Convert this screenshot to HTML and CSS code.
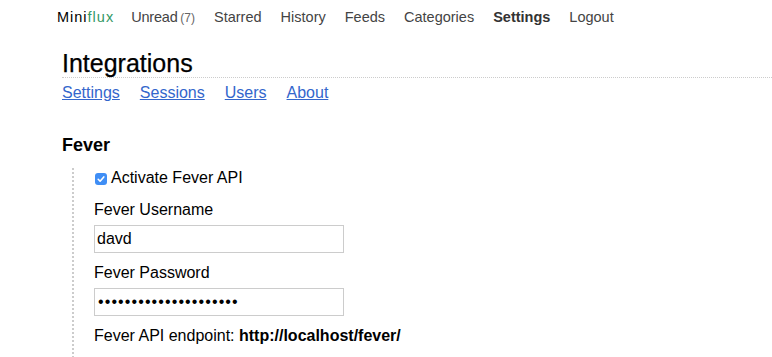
FILE: index.html
```html
<!DOCTYPE html>
<html lang="en">
<head>
<meta charset="utf-8">
<title>Integrations - Miniflux</title>
<link rel="stylesheet" href="styles.css">
</head>
<body>
<header class="header">
  <nav>
    <ul class="menu">
      <li class="logo"><a href="#">Mini<span>flux</span></a></li>
      <li class="unread"><a href="#">Unread <span class="count">(7)</span></a></li>
      <li><a href="#">Starred</a></li>
      <li><a href="#">History</a></li>
      <li><a href="#">Feeds</a></li>
      <li><a href="#">Categories</a></li>
      <li class="active"><a href="#">Settings</a></li>
      <li><a href="#">Logout</a></li>
    </ul>
  </nav>
</header>
<main class="main">
  <section class="page-header">
    <h1>Integrations</h1>
    <ul class="subnav">
      <li><a href="#">Settings</a></li>
      <li><a href="#">Sessions</a></li>
      <li><a href="#">Users</a></li>
      <li><a href="#">About</a></li>
    </ul>
  </section>
  <form class="form">
    <h3>Fever</h3>
    <div class="form-section">
      <label class="check-row">
        <span class="cb"><svg width="12" height="12" viewBox="0 0 12 12"><path d="M3.2 6.3 L5.1 8.2 L8.8 3.9" fill="none" stroke="#fff" stroke-width="1.6" stroke-linecap="round" stroke-linejoin="round"/></svg></span>
        Activate Fever API
      </label>
      <label class="field-label" for="u">Fever Username</label>
      <input class="field" id="u" type="text" value="davd">
      <label class="field-label" for="p">Fever Password</label>
      <input class="field pw" id="p" type="password" value="aaaaaaaaaaaaaaaaaaaaa">
      <p class="endpoint">Fever API endpoint: <strong>http://localhost/fever/</strong></p>
    </div>
  </form>
</main>
</body>
</html>
```
FILE: styles.css
```css
html, body {
  margin: 0;
  padding: 0;
  background: #fff;
}
body {
  font-family: "Liberation Sans", Arial, sans-serif;
  color: #000;
  font-size: 16px;
}
a {
  text-decoration: none;
}
.header {
  padding: 7px 0 0 57px;
}
.menu {
  list-style: none;
  margin: 0;
  padding: 0;
  display: flex;
  gap: 19px;
  font-size: 14.5px;
  line-height: 20px;
}
.menu a {
  color: #444;
}
.menu .logo {
  margin-right: -2px;
}
.menu .logo a {
  color: #000;
  letter-spacing: 1px;
}
.menu .logo span {
  color: #339966;
}
.menu .unread a {
  letter-spacing: -0.2px;
}
.menu .count {
  font-size: 12px;
  color: #666;
  letter-spacing: 0;
  margin-left: -1px;
}
.menu .active a {
  font-weight: bold;
  color: #333;
}
.main {
  padding-left: 62px;
}
.page-header h1 {
  margin: 20px 0 0;
  font-size: 25px;
  font-weight: normal;
  line-height: 30px;
  height: 30px;
  border-bottom: 1px dotted #ccc;
  box-sizing: border-box;
  -webkit-text-stroke: 0.25px #000;
}
.subnav {
  list-style: none;
  margin: 5px 0 0;
  padding: 0;
  display: flex;
  gap: 20px;
  line-height: 20px;
}
.subnav a {
  color: #3366cc;
  text-decoration: underline;
}
.form h3 {
  margin: 31px 0 12px;
  font-size: 18px;
  line-height: 22px;
}
.form-section {
  margin-left: 10px;
  border-left: 2px dotted #ccc;
  padding-left: 20px;
  display: flex;
  flex-direction: column;
  align-items: flex-start;
  line-height: 20px;
}
.check-row {
  display: flex;
  align-items: center;
  gap: 4px;
  margin-left: 1px;
  height: 20px;
}
.cb {
  width: 12px;
  height: 12px;
  border-radius: 3px;
  background: #3f8ef5;
  display: block;
  margin-top: 2px;
}
.cb svg {
  display: block;
}
.field-label {
  margin-top: 12px;
}
.field {
  margin: 5px 0 0;
  width: 250px;
  height: 28px;
  box-sizing: border-box;
  border: 1px solid #ccc;
  padding: 0 2px;
  font-family: "Liberation Sans", Arial, sans-serif;
  font-size: 16px;
  color: #000;
  outline: none;
}
.field + .field-label {
  margin-top: 10px;
}
.pw {
  letter-spacing: 1.1px;
  padding-left: 3px;
}
.endpoint {
  margin: 10px 0 0;
  padding-bottom: 20px;
}
```
